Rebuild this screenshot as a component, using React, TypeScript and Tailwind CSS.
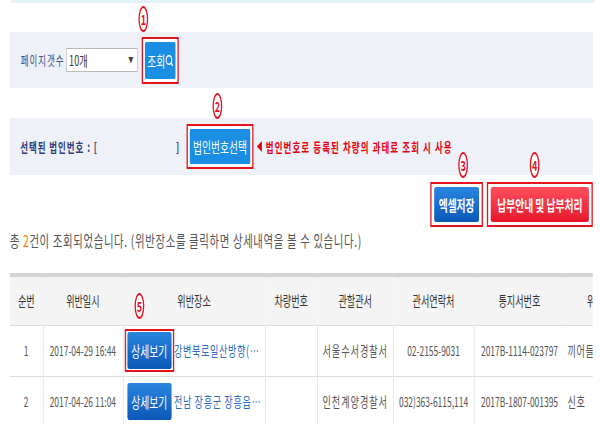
import { Search } from "lucide-react";

const Mark = ({ n, className }: { n: number; className: string }) => (
  <div
    className={`absolute flex items-center justify-center w-[15px] h-[26px] rounded-[50%] border-2 border-[#e3131f] bg-white text-[14px] leading-none font-bold text-[#e3131f] ${className}`}
  >
    {n}
  </div>
);

const Outline = ({ on = true, className = "", children }: { on?: boolean; className?: string; children: React.ReactNode }) => (
  <div className={`border-2 ${on ? "border-[#e3131f]" : "border-transparent"} bg-white ${className}`}>{children}</div>
);

const rows = [
  {
    no: 1,
    date: "2017-04-29 16:44",
    place: "강변북로일산방향(…",
    car: "",
    office: "서울수서경찰서",
    tel: "02-2155-9031",
    notice: "2017B-1114-023797",
    content: "끼어들기 금지 위반",
    marked: true,
  },
  {
    no: 2,
    date: "2017-04-26 11:04",
    place: "전남 장흥군 장흥읍…",
    car: "",
    office: "인천계양경찰서",
    tel: "032)363-6115,114",
    notice: "2017B-1807-001395",
    content: "신호",
    marked: false,
  },
];

const cols = ["순번", "위반일시", "위반장소", "차량번호", "관할관서", "관서연락처", "통지서번호", "위반내용"];
const widths = [51, 123, 219, 80, 117, 124, 140, 120];

export default function App() {
  return (
    <div className="w-[600px] h-[424px] overflow-hidden bg-white">
      <div className="relative w-[923px] origin-top-left [transform:scaleX(0.65)] font-['Noto_Sans_CJK_KR','Noto_Sans',sans-serif]">
        {/* top strip */}
        <div className="ml-[17px] w-[898px] h-[3px] bg-[#e3f1fa] rounded-b-[3px]" />

        {/* page size */}
        <div className="mt-[29px] ml-[15px] w-[897px] h-[56px] bg-[#eef1f7] flex items-center pl-[17px]">
          <span className="text-[13px] tracking-[1.5px] text-[#3e4f86]">페이지갯수</span>
          <div className="ml-[3px] w-[110px] h-[24px] border border-[#b9b9b9] bg-white flex items-center justify-between pl-[3px] pr-[6px]">
            <span className="text-[14px] text-[#333] leading-none">10개</span>
            <span className="text-[8px] text-[#444]">▼</span>
          </div>
          <Outline className="ml-[6px] p-[3px]">
            <button className="w-[47px] h-[37px] bg-[#1a8ee2] rounded-[2px] text-white text-[15px] leading-none flex items-center justify-center">
              조회
              <Search className="w-[13px] h-[13px]" strokeWidth={3} />
            </button>
          </Outline>
        </div>

        {/* corporate number */}
        <div className="mt-[30px] ml-[15px] w-[897px] h-[57px] bg-[#eef1f7] flex items-center pl-[16px]">
          <div className="w-[246px] flex justify-between text-[13px] tracking-[1.5px] font-bold text-[#2c3d78]">
            <span>선택된 법인번호 : [</span>
            <span>]</span>
          </div>
          <Outline className="ml-[10px] p-[3px]">
            <button className="w-[93px] h-[35px] bg-[#1a8ee2] rounded-[2px] text-white text-[15px] leading-none">
              법인번호선택
            </button>
          </Outline>
          <svg className="ml-[5px]" width="8" height="11" viewBox="0 0 8 11">
            <polygon points="8,0 8,11 0,5.5" fill="#e60012" />
          </svg>
          <span className="ml-[6px] text-[13px] tracking-[1.7px] font-bold text-[#e60012]">
            법인번호로 등록된 차량의 과태료 조회 시 사용
          </span>
        </div>

        {/* action buttons */}
        <div className="mt-[7px] w-[912px] flex justify-end gap-[6px]">
          <Outline className="px-[4px] py-[3px]">
            <button className="w-[69px] h-[35px] rounded-[3px] bg-gradient-to-b from-[#2a86e0] to-[#0b58b8] text-white text-[15px] font-bold leading-none">
              엑셀저장
            </button>
          </Outline>
          <Outline className="px-[4px] py-[3px]">
            <button className="w-[151px] h-[35px] rounded-[3px] bg-gradient-to-b from-[#ff4d5c] to-[#e5102a] text-white text-[15px] font-bold leading-none">
              납부안내 및 납부처리
            </button>
          </Outline>
        </div>

        {/* result count */}
        <p className="mt-[3px] ml-[15px] text-[16px] tracking-[1px] leading-[20px] text-[#555]">
          총 <span className="text-[#ff7a00]">2</span>건이 조회되었습니다. (위반장소를 클릭하면 상세내역을 볼 수 있습니다.)
        </p>

        {/* table */}
        <div className="mt-[23px] ml-[15px] w-[897px] overflow-hidden">
          <table className="table-fixed border-collapse w-[974px]">
            <colgroup>
              {widths.map((w, i) => (
                <col key={i} style={{ width: w }} />
              ))}
            </colgroup>
            <thead>
              <tr className="h-[50px] bg-[#f4f4f4] border-t-[4px] border-t-[#d4d4d4] border-b border-b-[#dcdcdc]">
                {cols.map((c) => (
                  <th key={c} className="text-[14px] font-normal text-[#333] whitespace-nowrap">
                    {c}
                  </th>
                ))}
              </tr>
            </thead>
            <tbody>
              {rows.map((r) => (
                <tr key={r.no} className="h-[51px] border-b border-[#dcdcdc] text-[13px] text-[#555]">
                  <td className="text-center">{r.no}</td>
                  <td className="text-center border-l border-[#dcdcdc] whitespace-nowrap">{r.date}</td>
                  <td className="border-l border-[#dcdcdc] pl-[2px]">
                    <div className="flex items-center">
                      <Outline on={r.marked} className="px-[2px] py-[1px] bg-transparent">
                        <button className="w-[68px] h-[37px] rounded-[3px] bg-gradient-to-b from-[#2a86e0] to-[#0b58b8] text-white text-[15px] leading-none">
                          상세보기
                        </button>
                      </Outline>
                      <span className="text-[14px] tracking-[1px] text-[#2b6cc4] whitespace-nowrap">{r.place}</span>
                    </div>
                  </td>
                  <td className="border-l border-[#dcdcdc]">{r.car}</td>
                  <td className="text-center border-l border-[#dcdcdc] whitespace-nowrap text-[14px] tracking-[1.5px]">{r.office}</td>
                  <td className="text-center border-l border-[#dcdcdc] whitespace-nowrap">{r.tel}</td>
                  <td className="text-center border-l border-[#dcdcdc] whitespace-nowrap">{r.notice}</td>
                  <td className="pl-[4px] whitespace-nowrap text-[14px] tracking-[1px]">{r.content}</td>
                </tr>
              ))}
            </tbody>
          </table>
        </div>

        {/* annotation marks */}
        <Mark n={1} className="left-[213px] top-[6px]" />
        <Mark n={2} className="left-[327px] top-[93px]" />
        <Mark n={3} className="left-[705px] top-[152px]" />
        <Mark n={4} className="left-[815px] top-[152px]" />
        <Mark n={5} className="left-[207px] top-[293px]" />
      </div>
    </div>
  );
}
